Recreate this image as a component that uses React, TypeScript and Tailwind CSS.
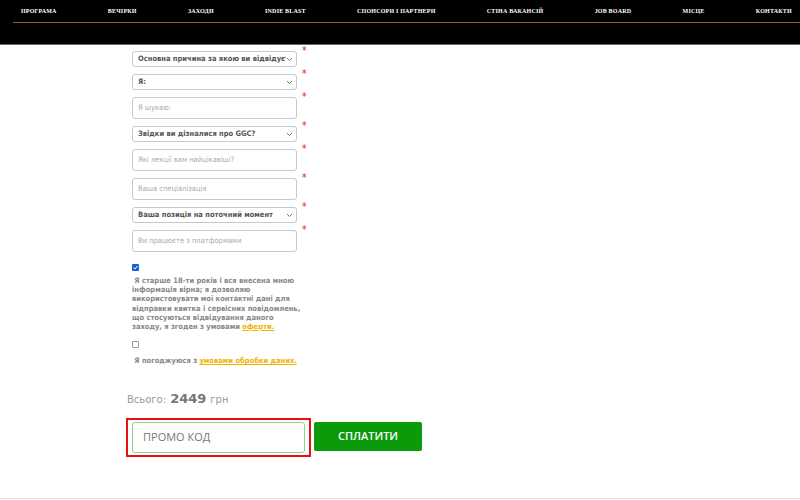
import React from 'react';

const nav = ['ПРОГРАМА', 'ВЕЧІРКИ', 'ЗАХОДИ', 'INDIE BLAST', 'СПОНСОРИ І ПАРТНЕРИ', 'СТІНА ВАКАНСІЙ', 'JOB BOARD', 'МІСЦЕ', 'КОНТАКТИ'];

const Chevron = () => (
  <svg width="7" height="5" viewBox="0 0 7 5" className="shrink-0">
    <path d="M1 1l2.5 2.5L6 1" fill="none" stroke="#777" strokeWidth="1" />
  </svg>
);

const Star = () => <span className="ml-[5px] -mt-[5px] text-[10px] leading-none text-[#e02020]">*</span>;

const SelectField = ({ label }: { label: string }) => (
  <div className="flex items-start">
    <div className="flex h-[16px] w-[165px] items-center justify-between rounded-[3px] border border-[#c8c8c8] bg-white pl-[5px] pr-[3px]">
      <span className="overflow-hidden whitespace-nowrap text-[7.5px] font-bold text-[#555]">{label}</span>
      <Chevron />
    </div>
    <Star />
  </div>
);

const InputField = ({ label }: { label: string }) => (
  <div className="flex items-start">
    <div className="flex h-[22px] w-[165px] items-center rounded-[3px] border border-[#c8c8c8] bg-white pl-[5px]">
      <span className="whitespace-nowrap text-[7.5px] text-[#aaa]">{label}</span>
    </div>
    <Star />
  </div>
);

export default function App() {
  return (
    <div className="h-[500px] w-[800px] overflow-hidden bg-white" style={{ fontFamily: '"DejaVu Sans Condensed", "Liberation Sans", sans-serif' }}>
      <header className="h-[45px] border-b border-[#666] bg-black">
        <div className="ml-[13px] flex h-[23px] items-center justify-between border-b border-[#8a6d0b] pl-[8px] pr-[8px]">
          {nav.map((n) => (
            <span key={n} className="pt-[1px] text-[6px] font-bold tracking-[0.2px] text-white" style={{ fontFamily: '"Liberation Serif", serif' }}>
              {n}
            </span>
          ))}
        </div>
      </header>

      <div className="ml-[132px] mt-[6px] flex flex-col">
        <div className="flex flex-col gap-[7px]">
          <SelectField label="Основна причина за якою ви відвідуєте" />
          <SelectField label="Я:" />
          <InputField label="Я шукаю:" />
          <SelectField label="Звідки ви дізналися про GGC?" />
          <InputField label="Які лекції вам найцікавіші?" />
          <InputField label="Ваша спеціалізація" />
          <SelectField label="Ваша позиція на поточний момент" />
          <InputField label="Ви працюєте з платформами" />
        </div>

        <div className="mt-[12px] h-[7px] w-[7px] rounded-[1px] bg-[#1a5fd6]">
          <svg width="7" height="7" viewBox="0 0 7 7" className="block">
            <path d="M1.5 3.5l1.5 1.5 2.5-3" fill="none" stroke="white" strokeWidth="1" />
          </svg>
        </div>
        <p className="mt-[5px] w-[170px] text-[7.5px] font-bold leading-[9.2px] text-[#888]">
          &nbsp;Я старше 18-ти років і вся внесена мною інформація вірна; я дозволяю використовувати мої контактні дані для відправки квитка і сервісних повідомлень, що стосуються відвідування даного заходу, я згоден з умовами{' '}
          <span className="text-[#f0b400] underline">оферти.</span>
        </p>

        <div className="mt-[10px] h-[7px] w-[7px] rounded-[1px] border border-[#999] bg-white" />
        <p className="mt-[8px] whitespace-nowrap text-[7.5px] font-bold leading-[9.2px] text-[#888]">
          &nbsp;Я погоджуюся з <span className="text-[#f0b400] underline">умовами обробки даних.</span>
        </p>
      </div>

      <div className="ml-[127px] mt-[24px] flex items-baseline gap-[4px] text-[#999]">
        <span className="text-[10px]" style={{ fontFamily: '"DejaVu Sans", sans-serif' }}>Всього:</span>
        <span className="text-[13px] font-bold text-[#777]" style={{ fontFamily: '"DejaVu Sans", sans-serif' }}>2449</span>
        <span className="text-[10px]" style={{ fontFamily: '"DejaVu Sans", sans-serif' }}>грн</span>
      </div>

      <div className="ml-[126px] mt-[9px] flex items-start gap-[3px]">
        <div className="border-2 border-[#e81010] px-[4px] py-[2px]">
          <div className="flex h-[31px] w-[173px] items-center rounded-[3px] border border-[#90d090] pl-[10px]">
            <span className="text-[11px] text-[#777]" style={{ fontFamily: '"Open Sans", sans-serif' }}>ПРОМО КОД</span>
          </div>
        </div>
        <button className="mt-[4px] flex h-[29px] w-[108px] items-center justify-center rounded-[2px] bg-[#0a9a0a] text-[11px] font-semibold text-white" style={{ fontFamily: '"Open Sans", sans-serif' }}>
          СПЛАТИТИ
        </button>
      </div>

      <div className="mt-[41px] border-t border-[#ddd]" />
    </div>
  );
}
